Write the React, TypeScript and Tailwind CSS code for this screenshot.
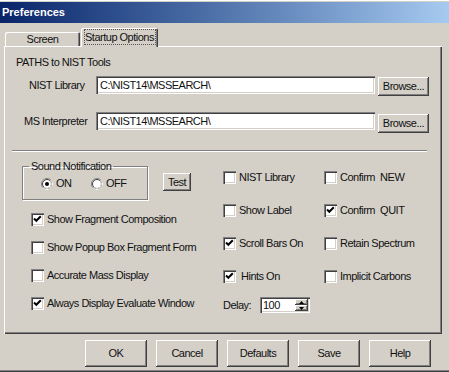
import React from 'react';

const raised = 'bg-[#d4d0c8] shadow-[inset_-1px_-1px_#404040,inset_1px_1px_#fff,inset_-2px_-2px_#808080]';
const sunken = 'bg-white shadow-[inset_1px_1px_#808080,inset_2px_2px_#404040,inset_-1px_-1px_#fff,inset_-2px_-2px_#d4d0c8]';

function Button({ label, className }: { label: string; className: string }) {
  return <div className={`${raised} flex items-center justify-center ${className}`}>{label}</div>;
}

function Check({ label, checked = false, gap = 'gap-[3px]' }: { label: string; checked?: boolean; gap?: string }) {
  return (
    <div className={`flex items-center h-[13px] ${gap}`}>
      <div className={`${sunken} w-[13px] h-[13px] flex-shrink-0`}>
        {checked && (
          <svg width="13" height="13" viewBox="0 0 13 13">
            <path d="M3 5.5 L5.3 7.8 L9.8 3.3" stroke="#000" strokeWidth="2" fill="none" />
          </svg>
        )}
      </div>
      <span className="whitespace-pre">{label}</span>
    </div>
  );
}

function Radio({ label, on = false }: { label: string; on?: boolean }) {
  return (
    <div className="flex items-center gap-[3px] w-[50px]">
      <svg width="12" height="12" viewBox="0 0 12 12" className="flex-shrink-0">
        <circle cx="6" cy="6" r="5.5" fill="#fff" stroke="#808080" />
        <path d="M9.89 2.11 A5.5 5.5 0 0 1 2.11 9.89" stroke="#fff" fill="none" />
        <circle cx="6" cy="6" r="4.5" fill="none" stroke="#404040" />
        <path d="M9.18 2.82 A4.5 4.5 0 0 1 2.82 9.18" stroke="#d4d0c8" fill="none" />
        {on && <circle cx="6" cy="6" r="2" fill="#000" />}
      </svg>
      <span>{label}</span>
    </div>
  );
}

function PathRow({ label, pad, mt, btnMt }: { label: string; pad: string; mt: string; btnMt: string }) {
  return (
    <div className={`flex items-start ${mt}`}>
      <div className={`w-[92px] h-[18px] flex items-center whitespace-nowrap ${pad}`}>{label}</div>
      <div className={`${sunken} w-[279px] h-[18px] flex items-center pl-[4px]`}>C:\NIST14\MSSEARCH\</div>
      <Button label="Browse..." className={`ml-[3px] w-[51px] h-[19px] ${btnMt}`} />
    </div>
  );
}

export default function App() {
  return (
    <div className="w-[449px] h-[372px] overflow-hidden bg-[#d4d0c8] pt-[2px] font-['Liberation_Sans',Arial,sans-serif] text-[11px] leading-[13px] tracking-[-0.5px] text-[#111] shadow-[inset_0_1px_#fff,inset_0_-1px_#404040,inset_0_-2px_#808080]">
      {/* Title bar */}
      <div className="h-[21px] flex items-center pl-[2px] bg-linear-to-r from-[#0a246a] to-[#a6caf0] text-white font-bold tracking-normal">
        Preferences
      </div>

      <div className="px-[4px]">
        {/* Tabs */}
        <div className="h-[23px] flex items-end pl-[1px]">
          <div className="w-[75px] h-[14px] rounded-t-[2px] flex items-center justify-center pt-[1px] shadow-[inset_1px_1px_#fff,inset_-1px_0_#404040,inset_-2px_0_#808080]">
            Screen
          </div>
          <div className="relative z-10 -mb-[1px] ml-[1px] w-[77px] h-[19px] rounded-t-[2px] bg-[#d4d0c8] flex justify-center pt-[1px] shadow-[inset_1px_1px_#fff,inset_-1px_0_#404040,inset_-2px_0_#808080]">
            <div className="w-[72px] h-[16px] border border-dotted border-[#555] flex items-center justify-center">
              Startup Options
            </div>
          </div>
        </div>

        {/* Panel */}
        <div className="w-[438px] h-[288px] flex flex-col shadow-[inset_1px_1px_#fff,inset_-1px_-1px_#404040,inset_-2px_-2px_#808080]">
          <div className="pt-[10px] pl-[12px]">PATHS to NIST Tools</div>
          <PathRow label="NIST Library" pad="pl-[25px]" mt="mt-[7px]" btnMt="mt-[1px]" />
          <PathRow label="MS Interpreter" pad="pl-[20px]" mt="mt-[16px]" btnMt="mt-[2px]" />

          <div className="mt-[17px] ml-[8px] w-[415px] h-[2px] border-t border-t-[#808080] border-b border-b-white" />

          <div className="flex pl-[18px]">
            {/* Column 1 */}
            <div className="w-[201px] flex flex-col mt-[8px]">
              <div className="flex items-start">
                <fieldset className="w-[123px] h-[40px] px-[6px] border border-[#808080] shadow-[1px_1px_#fff,inset_1px_1px_#fff]">
                  <legend className="px-[2px] leading-[13px]">Sound Notification</legend>
                  <div className="flex mt-[4px] ml-[12px]">
                    <Radio label="ON" on />
                    <Radio label="OFF" />
                  </div>
                </fieldset>
                <Button label="Test" className="ml-[15px] mt-[13px] w-[28px] h-[18px]" />
              </div>
              <div className="flex flex-col gap-[15px] mt-[13px] pl-[9px]">
                <Check label="Show Fragment Composition" checked />
                <Check label="Show Popup Box Fragment Form" />
                <Check label="Accurate Mass Display" />
                <Check label="Always Display Evaluate Window" checked />
              </div>
            </div>

            {/* Column 2 */}
            <div className="w-[101px] flex flex-col mt-[19px]">
              <div className="flex flex-col gap-[20px]">
                <Check label="NIST Library" />
                <Check label="Show Label" />
                <Check label="Scroll Bars On" checked />
                <Check label="Hints On" checked gap="gap-[5px]" />
              </div>
              <div className="flex items-center mt-[14px]">
                <span className="w-[37px]">Delay:</span>
                <div className={`${sunken} w-[50px] h-[16px] flex items-center pl-[3px] pr-[2px]`}>
                  <span className="flex-1">100</span>
                  <div className="flex flex-col w-[13px] h-[12px]">
                    <div className={`${raised} h-[6px] flex items-center justify-center`}>
                      <svg width="5" height="3" viewBox="0 0 5 3"><polygon points="0,3 2.5,0 5,3" fill="#000" /></svg>
                    </div>
                    <div className={`${raised} h-[6px] flex items-center justify-center`}>
                      <svg width="5" height="3" viewBox="0 0 5 3"><polygon points="0,0 2.5,3 5,0" fill="#000" /></svg>
                    </div>
                  </div>
                </div>
              </div>
            </div>

            {/* Column 3 */}
            <div className="flex flex-col gap-[20px] mt-[19px]">
              <Check label="Confirm  NEW" />
              <Check label="Confirm  QUIT" checked />
              <Check label="Retain Spectrum" />
              <Check label="Implicit Carbons" />
            </div>
          </div>
        </div>

        {/* Dialog buttons */}
        <div className="mt-[6px] flex gap-[9px] pl-[81px]">
          <Button label="OK" className="w-[62px] h-[27px]" />
          <Button label="Cancel" className="w-[62px] h-[27px]" />
          <Button label="Defaults" className="w-[62px] h-[27px]" />
          <Button label="Save" className="w-[62px] h-[27px]" />
          <Button label="Help" className="w-[62px] h-[27px]" />
        </div>
      </div>
    </div>
  );
}
